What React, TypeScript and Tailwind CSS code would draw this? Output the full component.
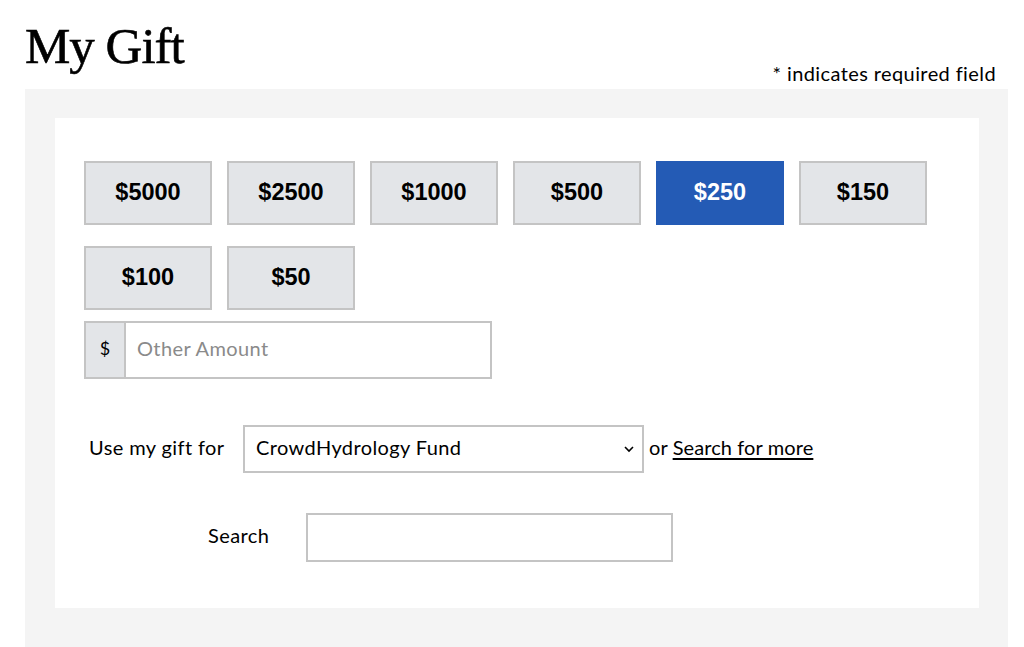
const amounts = ["$5000", "$2500", "$1000", "$500", "$250", "$150", "$100", "$50"];

const sans = "font-['Lato','Open_Sans',sans-serif]";

function AmountButton({ label, selected }: { label: string; selected: boolean }) {
  return (
    <button
      type="button"
      className={
        selected
          ? "h-[64px] w-[128px] border-2 border-[#245bb5] bg-[#245bb5] font-['Liberation_Sans',Arial,sans-serif] text-[23.5px] font-bold text-white"
          : "h-[64px] w-[128px] border-2 border-[#c4c4c4] bg-[#e3e5e8] font-['Liberation_Sans',Arial,sans-serif] text-[23.5px] font-bold text-black"
      }
    >
      {label}
    </button>
  );
}

export default function App() {
  return (
    <div className={`min-h-[647px] bg-white pl-[25px] pr-[16px] ${sans}`}>
      <div className="flex h-[89px] justify-between">
        <h1 className="pt-[19px] font-['Liberation_Serif',serif] text-[51px] leading-[54px] tracking-[-1px] text-black [-webkit-text-stroke:0.6px_black]">
          My Gift
        </h1>
        <p className="mb-[4px] mr-[12px] self-end text-[20px] leading-[24px] tracking-[0.4px] text-black">
          * indicates required field
        </p>
      </div>
      <div className="bg-[#f4f4f4] pb-[40px] pl-[30px] pr-[29px] pt-[29px]">
        <div className="bg-white pb-[46px] pl-[29px] pr-[29px] pt-[43px]">
          <div className="flex max-w-[860px] flex-wrap gap-x-[15px] gap-y-[21px]">
            {amounts.map((a) => (
              <AmountButton key={a} label={a} selected={a === "$250"} />
            ))}
          </div>
          <div className="mt-[11px] flex h-[58px] w-[408px] border-2 border-[#c4c4c4]">
            <span className="flex w-[40px] items-center justify-center border-r-2 border-[#c4c4c4] bg-[#e3e5e8] pb-[4px] text-[18px] text-black">
              $
            </span>
            <input
              className="flex-1 bg-white px-[11px] pb-[5px] text-[20px] tracking-[0.4px] text-black outline-none placeholder:text-[#8a8a8a]"
              placeholder="Other Amount"
            />
          </div>
          <div className="mt-[46px] flex items-center pl-[5px]">
            <label className="w-[154px] pb-[4px] text-[20px] tracking-[0.4px] text-black">Use my gift for</label>
            <div className="flex h-[48px] w-[401px] items-center justify-between border-2 border-[#c4c4c4] bg-white pl-[11px] pr-[7px]">
              <span className="pb-[4px] text-[20px] tracking-[0.4px] text-black">CrowdHydrology Fund</span>
              <svg width="12" height="8" viewBox="0 0 12 8" fill="none" stroke="black" strokeWidth="1.6">
                <path d="M2 2l4 4 4-4" />
              </svg>
            </div>
            <span className="ml-[5px] pb-[4px] text-[20px] tracking-[0.1px] text-black">
              or{" "}
              <a href="#" className="underline decoration-2 underline-offset-[3px]">
                Search for more
              </a>
            </span>
          </div>
          <div className="mt-[40px] flex items-center pl-[124px]">
            <label className="w-[98px] pb-[6px] text-[20px] tracking-[0.4px] text-black">Search</label>
            <input className="h-[49px] w-[367px] border-2 border-[#c4c4c4] bg-white outline-none" />
          </div>
        </div>
      </div>
    </div>
  );
}
